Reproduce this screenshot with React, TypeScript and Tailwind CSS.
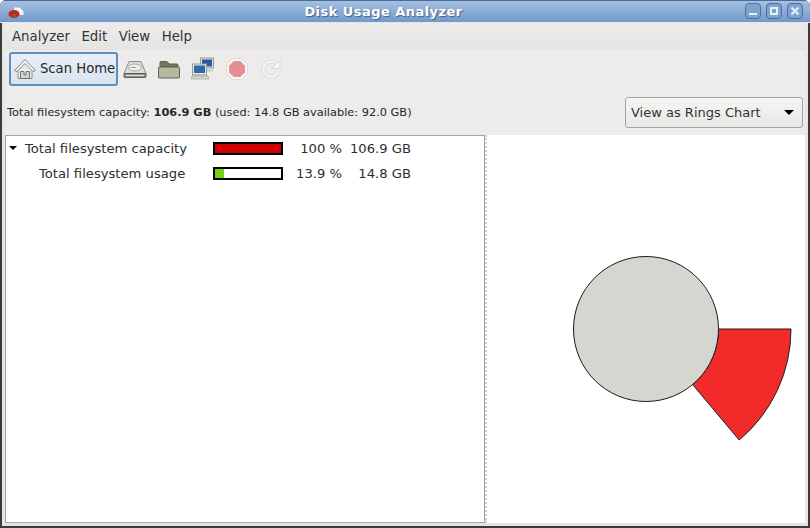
const font = "font-['DejaVu_Sans',sans-serif]";

function HomeIcon() {
  return (
    <svg width="24" height="24" viewBox="0 0 24 24">
      <path d="M5 12v9.500h14V12" fill="#eeeeec" stroke="#888a85" />
      <path d="M1.500 13.500L12 2.500 22.500 13.500l-2.500 1L12 6.500 4 14.500z" fill="#f6f6f4" stroke="#858782" strokeLinejoin="round" />
      <path d="M7.500 21.500v-7h3.500v3.500h2v-3.500h3.500v7z" fill="#d3d7cf" stroke="#6f726d" />
    </svg>
  );
}

function DiskIcon() {
  return (
    <svg width="24" height="24" viewBox="0 0 24 24">
      <path d="M6 4.500h12l5 12H1z" fill="#dcdcd9" stroke="#8a8c86" />
      <path d="M1 16.500h22v3a1 1 0 0 1-1 1H2a1 1 0 0 1-1-1z" fill="#8d8f8a" stroke="#5c5e5a" />
      <ellipse cx="12" cy="10.500" rx="6.500" ry="3.500" fill="#eeeeec" stroke="#a8aaa4" />
      <path d="M8 10.500h5" stroke="#9a9c97" />
      <path d="M3 18.500h18" stroke="#e4e4e2" />
    </svg>
  );
}

function FolderIcon() {
  return (
    <svg width="24" height="24" viewBox="0 0 24 24">
      <path d="M3 5.500a1 1 0 0 1 1-1h6l2 2.500h8a1 1 0 0 1 1 1v2H3z" fill="#77785f" stroke="#5b5c4c" />
      <path d="M2.500 10h19a1 1 0 0 1 1 1v9a1 1 0 0 1-1 1h-19a1 1 0 0 1-1-1v-9a1 1 0 0 1 1-1z" fill="#b6b8a0" stroke="#5f6050" />
    </svg>
  );
}

function NetworkIcon() {
  return (
    <svg width="24" height="24" viewBox="0 0 24 24">
      <rect x="9.500" y="1" width="13" height="10" fill="#dfe1dc" stroke="#9a9c97" />
      <rect x="11" y="2.500" width="10" height="7" fill="#2a5a9c" />
      <path d="M13 12.500h9v2h-9z" fill="#c9cbc6" />
      <rect x="1.500" y="7" width="14" height="11" fill="#e6e7e4" stroke="#9a9c97" />
      <rect x="3" y="8.500" width="11" height="7.500" fill="#2f68ad" />
      <path d="M1 19h16l1 3H0z" fill="#d5d7d2" stroke="#a2a49f" strokeWidth="0.700" />
    </svg>
  );
}

function StopIcon() {
  return (
    <svg width="24" height="24" viewBox="0 0 24 24">
      <path d="M7.500 1.500h9l6 6v9l-6 6h-9l-6-6v-9z" fill="#f6f6f5" stroke="#d8d8d6" />
      <path d="M8.700 4h6.600L20 8.700v6.600L15.300 20H8.700L4 15.300V8.700z" fill="#e48f92" />
    </svg>
  );
}

function RefreshIcon() {
  return (
    <svg width="24" height="24" viewBox="0 0 24 24" fill="none">
      <path d="M19 14a7.500 7.500 0 1 1-3-8" stroke="#d8d9d6" strokeWidth="4" />
      <path d="M19 14a7.500 7.500 0 1 1-3-8" stroke="#f4f4f3" strokeWidth="2.400" />
      <path d="M21 3v8.500h-8.500z" fill="#f4f4f3" stroke="#d8d9d6" />
    </svg>
  );
}

function UsageBar({ fill, color }: { fill: string; color: string }) {
  return (
    <div className="w-[70px] h-[13px] border-2 border-black bg-white">
      <div className={`h-full ${fill} ${color}`} />
    </div>
  );
}

function Row({ label, indent, bar, pct, size, expander }: { label: string; indent: string; bar: React.ReactNode; pct: string; size: string; expander?: boolean }) {
  return (
    <div className="h-[25px] flex items-center">
      <div className={`w-[207px] flex items-center ${indent}`}>
        {expander && <div className="w-0 h-0 mr-[8px] border-x-[4px] border-x-transparent border-t-[4px] border-t-black" />}
        <span>{label}</span>
      </div>
      {bar}
      <span className="w-[59px] text-right">{pct}</span>
      <span className="w-[69px] text-right">{size}</span>
    </div>
  );
}

export default function App() {
  return (
    <div className={`w-[810px] h-[528px] flex flex-col overflow-hidden bg-[#3a3a3a] rounded-t-[6px] ${font} text-[#2e3436]`}>
      <div className="h-[23px] shrink-0 flex items-center relative bg-gradient-to-b from-[#a5c0e0] to-[#7199cb] border-t border-[#4a6a9c] border-b border-b-[#dfe8f3] px-[6px]">
        <svg width="18" height="14" viewBox="0 0 18 14" className="ml-px">
          <path d="M7 2.500h6l3.500 4v3.500H8z" fill="#f4f4f4" />
          <ellipse cx="7" cy="9" rx="5.500" ry="4" fill="#cc2222" />
          <path d="M5 12l2-3.500 2.500 3z" fill="#4a8a3a" />
        </svg>
        <div className="absolute left-0 w-[767px] text-center text-[13px] font-bold text-white tracking-[0.45px] [text-shadow:1px_1px_1px_#44608a]">Disk Usage Analyzer</div>
        <div className="ml-auto flex gap-[5px] pr-[1px] -mt-[1px]">
          <div className="w-[16px] h-[16px] rounded-[4px] border border-[#4c6f9f] bg-[#7fa3d0] flex items-center justify-center">
            <div className="w-[8px] h-[2px] mt-[5px] bg-[#e8eef6]" />
          </div>
          <div className="w-[16px] h-[16px] rounded-[4px] border border-[#4c6f9f] bg-[#7fa3d0] flex items-center justify-center">
            <div className="w-[8px] h-[8px] border-2 border-[#e8eef6]" />
          </div>
          <div className="w-[16px] h-[16px] rounded-[4px] border border-[#4c6f9f] bg-[#7fa3d0] flex items-center justify-center">
            <svg width="10" height="10" viewBox="0 0 10 10">
              <path d="M1.500 1.500l7 7M8.500 1.500l-7 7" stroke="#e8eef6" strokeWidth="2.200" />
            </svg>
          </div>
        </div>
      </div>

      <div className="flex-1 min-h-0 flex flex-col ml-[2px] mr-[2px] bg-[#edecea] border-x-[3px] border-x-[#e8e7e5] border-b-[3px] border-b-[#e4e4e2] mb-[2px]">
        <div className="h-[27px] shrink-0 flex items-center gap-[11.500px] pl-[7px] text-[13.3px] bg-gradient-to-b from-[#edecea] to-[#e5e4e2]">
          <span>Analyzer</span>
          <span>Edit</span>
          <span>View</span>
          <span>Help</span>
        </div>

        <div className="h-[38px] shrink-0 flex items-center pl-[4px]">
          <button className="w-[109px] h-[34px] flex items-center gap-[3px] pl-[2px] whitespace-nowrap rounded-[3px] border-2 border-[#5f8fc0] bg-gradient-to-b from-[#e9eff7] to-[#d9e3f0] text-[13.2px] text-[#23282a]">
            <HomeIcon />
            <span>Scan Home</span>
          </button>
          <div className="flex gap-[10px] ml-[5px]">
            <DiskIcon />
            <FolderIcon />
            <NetworkIcon />
            <StopIcon />
            <RefreshIcon />
          </div>
        </div>

        <div className="h-[47px] shrink-0 flex items-center justify-between pl-[2px] pr-[2px] pt-[2px]">
          <div className="text-[11.35px] text-[#23282a]">
            Total filesystem capacity: <b>106.9 GB</b> (used: 14.8 GB available: 92.0 GB)
          </div>
          <div className="w-[178px] h-[31px] flex items-center justify-between pl-[5px] pr-[8px] rounded-[3px] border border-[#a3a3a0] bg-gradient-to-b from-[#f5f5f4] to-[#e9e8e6] text-[13px]">
            <span>View as Rings Chart</span>
            <div className="w-0 h-0 border-x-[5px] border-x-transparent border-t-[5px] border-t-black" />
          </div>
        </div>

        <div className="flex-1 min-h-0 flex bg-white">
          <div className="w-[480px] shrink-0 border border-[#a6a6a4] bg-white text-[13.15px] text-[#2a2f31]">
            <Row label="Total filesystem capacity" indent="pl-[3px]" expander bar={<UsageBar fill="w-full" color="bg-[#cc0000]" />} pct="100 %" size="106.9 GB" />
            <Row label="Total filesystem usage" indent="pl-[33px]" bar={<UsageBar fill="w-[13.900%]" color="bg-[#73d216]" />} pct="13.9 %" size="14.8 GB" />
          </div>
          <div className="w-[4px] shrink-0 bg-white border-l-2 border-dotted border-l-[#d0d0ce]" />
          <div className="flex-1 relative bg-white">
            <svg width="316" height="388" viewBox="489 135 316 388" className="block">
              <path d="M791 329A145 145 0 0 1 739.200 440L692.600 384.500A72.500 72.500 0 0 0 718.500 329Z" fill="#f22a2a" stroke="#1c1c1c" />
              <circle cx="646" cy="329" r="72.500" fill="#d3d7cf" stroke="#1c1c1c" />
            </svg>
          </div>
        </div>
      </div>
    </div>
  );
}
